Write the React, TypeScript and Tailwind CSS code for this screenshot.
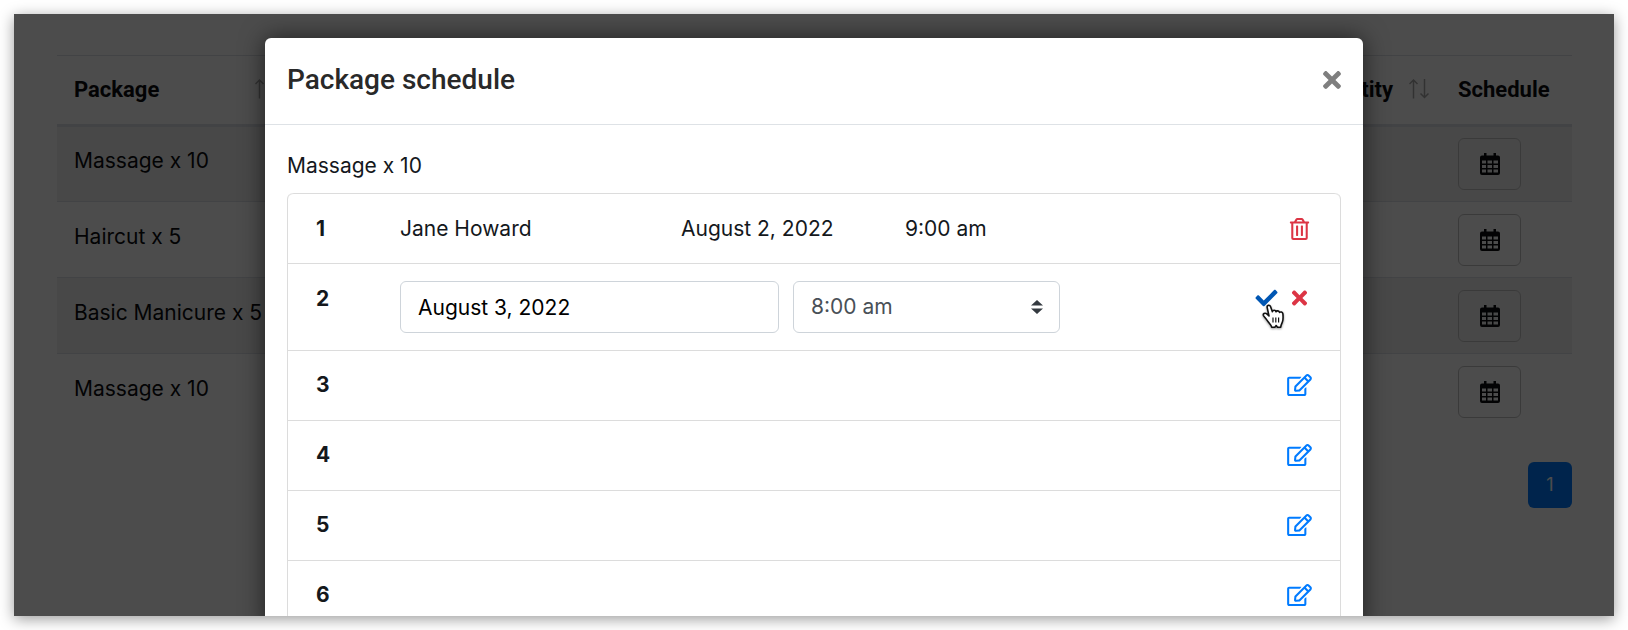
import { clsx } from "clsx";
import { FaCheck, FaRegEdit, FaRegTrashAlt, FaTimes } from "react-icons/fa";

type PackageRow = { id: number; name: string };

const packages: PackageRow[] = [
  { id: 1, name: "Massage x 10" },
  { id: 2, name: "Haircut x 5" },
  { id: 3, name: "Basic Manicure x 5" },
  { id: 4, name: "Massage x 10" }
];

const openSlots = [3, 4, 5, 6];

const slotGrid = "grid grid-cols-[84px_281px_224px_1fr_auto] border-t border-[#dcdcdc] px-7";
const slotIcon = "h-[22px] w-[25px]";

function SortIcon() {
  return (
    <svg className="h-5 w-5 shrink-0" viewBox="0 0 20 20" fill="none" stroke="#a8a8a8" strokeWidth="1.5" aria-hidden="true">
      <path d="M4.5 19.500V1M.5 5l4-4 4 4M15.500 0v18.500M11.500 14.500l4 4 4-4" />
    </svg>
  );
}

function CalendarIcon() {
  return (
    <svg className="h-[22px] w-[20px]" viewBox="0 0 20 22" aria-hidden="true">
      <path
        fill="currentColor"
        fillRule="evenodd"
        d="M4 0h2.500v2.500h7V0H16v2.500h2a2 2 0 0 1 2 2V20a2 2 0 0 1-2 2H2a2 2 0 0 1-2-2V4.500a2 2 0 0 1 2-2h2zM2 7.500v3h4v-3zm5.500 0v3h4.500v-3zm6 0v3h4.500v-3zM2 12v3h4v-3zm5.500 0v3h4.500v-3zm6 0v3h4.500v-3zM2 16.500v3h4v-3zm5.500 0v3h4.500v-3zm6 0v3h4.500v-3z"
      />
    </svg>
  );
}

function HandCursor() {
  return (
    <svg className="absolute left-2 top-[17px] h-[26px] w-6 drop-shadow-[0_1px_1px_rgba(0,0,0,0.4)]" viewBox="0 0 24 26" aria-hidden="true">
      <path
        d="M5.200 3.600C4.600 1.200 7.700.300 8.600 2.800l1.800 4.900c.400-1.900 3.200-1.900 3.600.1 .700-1.500 3.100-1.200 3.500.6 1.100-.900 3.200-.400 3.400 1.500.300 3.100.400 5.700-.5 8.100-.5 1.500-1.400 2.300-1.700 5.200h-3.200l-1.300-1.700-1.400 1.700H9.700c-.4-2.400-2.700-4.100-4.200-6.300C4.200 14.900 2.500 13.200 1.500 11.600c-.9-1.800 1.400-3.100 3-1.900l2.500 2.300z"
        fill="#fff"
        stroke="#111"
        strokeWidth="1.600"
        strokeLinejoin="round"
      />
      <path d="M11 13.500v5M13.800 13.500v5M16.600 13.500v5" stroke="#111" strokeWidth="1.200" />
    </svg>
  );
}

function PackagesPage() {
  return (
    <div className="pl-[43px] pr-[42px] pt-[41px]">
      <table className="w-full border-collapse text-left text-[#0b0d0f]">
        <thead>
          <tr className="h-[70px] border-b-3 border-t border-b-[#dee2e6] border-t-[#dee2e6] font-[Roboto] text-[22px]">
            <th className="w-[230px] pb-0.5 pl-[17px] pr-3 font-bold">
              <span className="flex items-center justify-between">
                Package <SortIcon />
              </span>
            </th>
            <th className="pb-0.5 pl-[17px] pr-3 font-bold">
              <span className="flex items-center justify-end gap-4">
                Quantity <SortIcon />
              </span>
            </th>
            <th className="w-[131px] px-[17px] pb-0.5 font-bold">Schedule</th>
          </tr>
        </thead>
        <tbody>
          {packages.map((row) => (
            <tr key={row.id} className="h-[76px] border-t border-[#dee2e6] odd:bg-[#f2f2f2]">
              <td className="whitespace-nowrap pb-1.5 pl-[17px]">{row.name}</td>
              <td />
              <td className="px-[17px]">
                <button
                  type="button"
                  aria-label="Open schedule"
                  className="flex h-[52px] w-[63px] items-center justify-center rounded-md border border-[#c4c4c4]"
                >
                  <CalendarIcon />
                </button>
              </td>
            </tr>
          ))}
        </tbody>
      </table>
      <nav className="mt-8 flex justify-end">
        <a href="#1" className="flex h-[46px] w-11 items-center justify-center rounded-md bg-[#007bff] text-lg text-white">
          1
        </a>
      </nav>
    </div>
  );
}

function OpenSlot({ slot }: { slot: number }) {
  return (
    <li className={clsx(slotGrid, "h-[70px] items-center pb-0.5")}>
      <span className="font-bold">{slot}</span>
      <button type="button" aria-label={`Edit ${slot}`} className="col-start-5 text-[#007bff]">
        <FaRegEdit className={slotIcon} />
      </button>
    </li>
  );
}

function ScheduleDialog() {
  return (
    <div
      role="dialog"
      aria-labelledby="schedule-title"
      className="mx-auto w-full max-w-[1098px] rounded-t-md bg-white shadow-[0_0_24px_rgba(0,0,0,0.6)]"
    >
      <header className="flex h-[87px] items-center justify-between border-b border-[#dee2e6] pb-0.5 pl-[22px] pr-[18px] font-[Roboto]">
        <h2 id="schedule-title" className="text-[28px] font-medium text-[#292929]">
          Package schedule
        </h2>
        <button type="button" aria-label="Close" className="text-[26px] text-[#7f7f7f]">
          <FaTimes />
        </button>
      </header>
      <div className="px-[22px] pt-[25px]">
        <p className="leading-8">Massage x 10</p>
        <ul className="mt-[11px] rounded-t-md border-x border-[#dcdcdc]">
          <li className={clsx(slotGrid, "h-[70px] items-center rounded-t-md")}>
            <span className="font-bold">1</span>
            <span>Jane Howard</span>
            <span>August 2, 2022</span>
            <span>9:00 am</span>
            <button type="button" aria-label="Delete 1" className="text-[#dc3545]">
              <FaRegTrashAlt className={slotIcon} />
            </button>
          </li>
          <li className={clsx(slotGrid, "py-[17px]")}>
            <span className="font-bold leading-9">2</span>
            <div className="col-span-3 flex gap-[14px]">
              <input
                aria-label="Date"
                defaultValue="August 3, 2022"
                className="h-[52px] w-[379px] rounded-md border border-[#ced4da] px-[17px] text-black"
              />
              <div className="relative">
                <select
                  aria-label="Time"
                  className="h-[52px] w-[267px] appearance-none rounded-md border border-[#ced4da] bg-white px-[17px] text-[#495057]"
                >
                  <option>8:00 am</option>
                </select>
                <svg className="pointer-events-none absolute right-[17px] top-[19px] h-[14px] w-3" viewBox="0 0 4 5" preserveAspectRatio="none" aria-hidden="true">
                  <path fill="#343a40" d="M2 0L0 2h4zm0 5L0 3h4z" />
                </svg>
              </div>
            </div>
            <div className="flex h-[34px] items-center gap-2">
              <button type="button" aria-label="Save" className="relative text-[#0056b3]">
                <FaCheck className={slotIcon} />
                <HandCursor />
              </button>
              <button type="button" aria-label="Cancel" className="text-[#dc3545]">
                <FaTimes className={slotIcon} />
              </button>
            </div>
          </li>
          {openSlots.map((slot) => (
            <OpenSlot key={slot} slot={slot} />
          ))}
        </ul>
      </div>
    </div>
  );
}

export default function App() {
  return (
    <div className="h-screen bg-white p-[14px] font-[Inter] text-[21px] text-[#14181c]">
      <main className="relative h-full overflow-hidden bg-white shadow-[0_3px_14px_rgba(0,0,0,0.4)]">
        <PackagesPage />
        <div className="absolute inset-0 bg-black/70 pt-6">
          <ScheduleDialog />
        </div>
      </main>
    </div>
  );
}
